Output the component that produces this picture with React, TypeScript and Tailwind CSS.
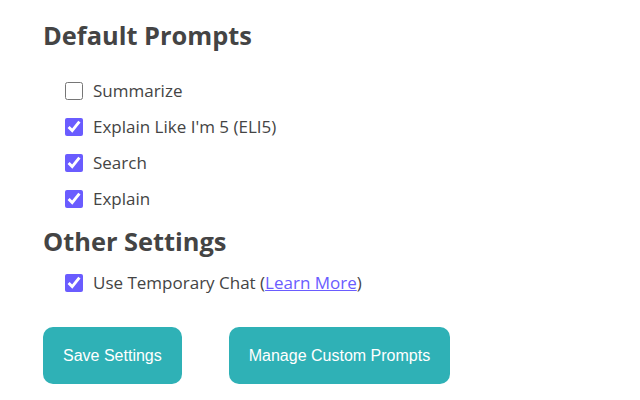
import { useState } from "react";

const prompts = [
  { id: "summarize", label: "Summarize", checked: false },
  { id: "eli5", label: "Explain Like I'm 5 (ELI5)", checked: true },
  { id: "search", label: "Search", checked: true },
  { id: "explain", label: "Explain", checked: true },
];

export default function App() {
  const [state, setState] = useState<Record<string, boolean>>(
    Object.fromEntries(prompts.map((p) => [p.id, p.checked]))
  );
  const [tempChat, setTempChat] = useState(true);

  return (
    <div className="w-[640px] h-[400px] bg-white text-[#444] font-['Open_Sans',sans-serif] pl-[43px] pt-[17px]">
      <h2 className="text-[25.4px] font-bold leading-[36px]">Default Prompts</h2>
      <div className="flex flex-col gap-[14px] pl-[22px] mt-[27px]">
        {prompts.map((p) => (
          <label key={p.id} className="flex items-center gap-[10px] text-[17px] leading-[22px]">
            <input
              type="checkbox"
              checked={state[p.id]}
              onChange={(e) => setState({ ...state, [p.id]: e.target.checked })}
              className="w-[18px] h-[18px] m-0 accent-[#6a5cff]"
            />
            {p.label}
          </label>
        ))}
      </div>
      <h2 className="text-[25.4px] font-bold leading-[36px] mt-[13px]">Other Settings</h2>
      <div className="pl-[22px] mt-[13px]">
        <label className="flex items-center gap-[10px] text-[17px] leading-[22px]">
          <input
            type="checkbox"
            checked={tempChat}
            onChange={(e) => setTempChat(e.target.checked)}
            className="w-[18px] h-[18px] m-0 accent-[#6a5cff]"
          />
          <span>
            Use Temporary Chat (
            <a href="#" className="text-[#6a5cff] underline">Learn More</a>)
          </span>
        </label>
      </div>
      <div className="flex gap-[47px] mt-[33px] font-['Liberation_Sans',Arial,sans-serif]">
        <button className="h-[57px] px-[20px] rounded-[10px] bg-[#2fb1b6] text-white text-[16px]">
          Save Settings
        </button>
        <button className="h-[57px] px-[20px] rounded-[10px] bg-[#2fb1b6] text-white text-[16px]">
          Manage Custom Prompts
        </button>
      </div>
    </div>
  );
}
